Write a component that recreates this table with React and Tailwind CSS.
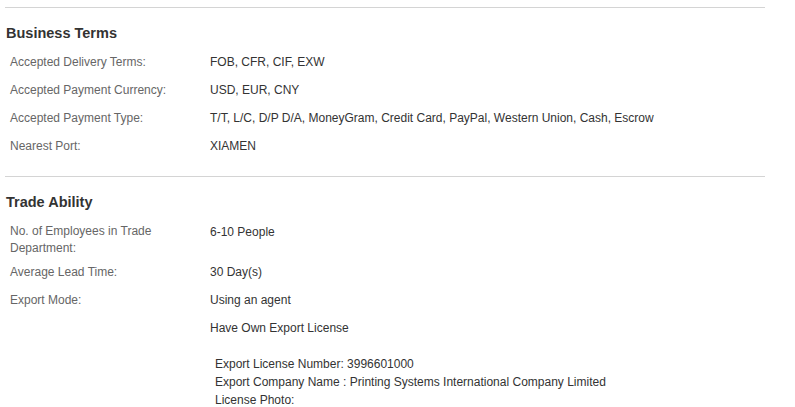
import React from 'react'

const businessTerms = [
  ['Accepted Delivery Terms:', 'FOB, CFR, CIF, EXW'],
  ['Accepted Payment Currency:', 'USD, EUR, CNY'],
  ['Accepted Payment Type:', 'T/T, L/C, D/P D/A, MoneyGram, Credit Card, PayPal, Western Union, Cash, Escrow'],
  ['Nearest Port:', 'XIAMEN'],
]

function Row({ label, value, className = 'py-[5px]' }) {
  return (
    <div className={`flex leading-[18px] ${className}`}>
      <div className="w-[205px] shrink-0 pl-[5px] pr-[20px] text-[#666]">{label}</div>
      <div className="text-[#333]">{value}</div>
    </div>
  )
}

function Heading({ children }) {
  return (
    <div className="mt-[15px] pl-[1px] text-[14.5px] font-bold leading-[20px] text-[#333]">{children}</div>
  )
}

export default function App() {
  return (
    <div className="min-h-[407px] bg-white font-['Liberation_Sans',Arial,sans-serif] text-[12px]">
      <div className="w-[760px] ml-[5px] pt-[7px]">
        {/* business terms */}
        <div className="border-t border-[#d4d4d4]" />
        <Heading>Business Terms</Heading>
        <div className="mt-[5px]">
          {businessTerms.map(([l, v]) => (
            <Row key={l} label={l} value={v} />
          ))}
        </div>

        {/* trade ability */}
        <div className="mt-[16px] border-t border-[#d4d4d4]" />
        <Heading>Trade Ability</Heading>
        <div className="mt-[5px]">
          <div className="flex pt-[6px] pb-[1px]">
            <div className="w-[205px] shrink-0 pl-[5px] pr-[40px] leading-[17px] text-[#666]">
              No. of Employees in Trade Department:
            </div>
            <div className="leading-[18px] text-[#333]">6-10 People</div>
          </div>
          <Row label="Average Lead Time:" value="30 Day(s)" />
          <Row label="Export Mode:" value="Using an agent" />
          <Row label="" value="Have Own Export License" />
          <div className="mt-[13px] pl-[210px] leading-[18px] text-[#333]">
            <div>Export License Number: 3996601000</div>
            <div>Export Company Name : Printing Systems International Company Limited</div>
            <div>License Photo:</div>
          </div>
        </div>
      </div>
    </div>
  )
}
